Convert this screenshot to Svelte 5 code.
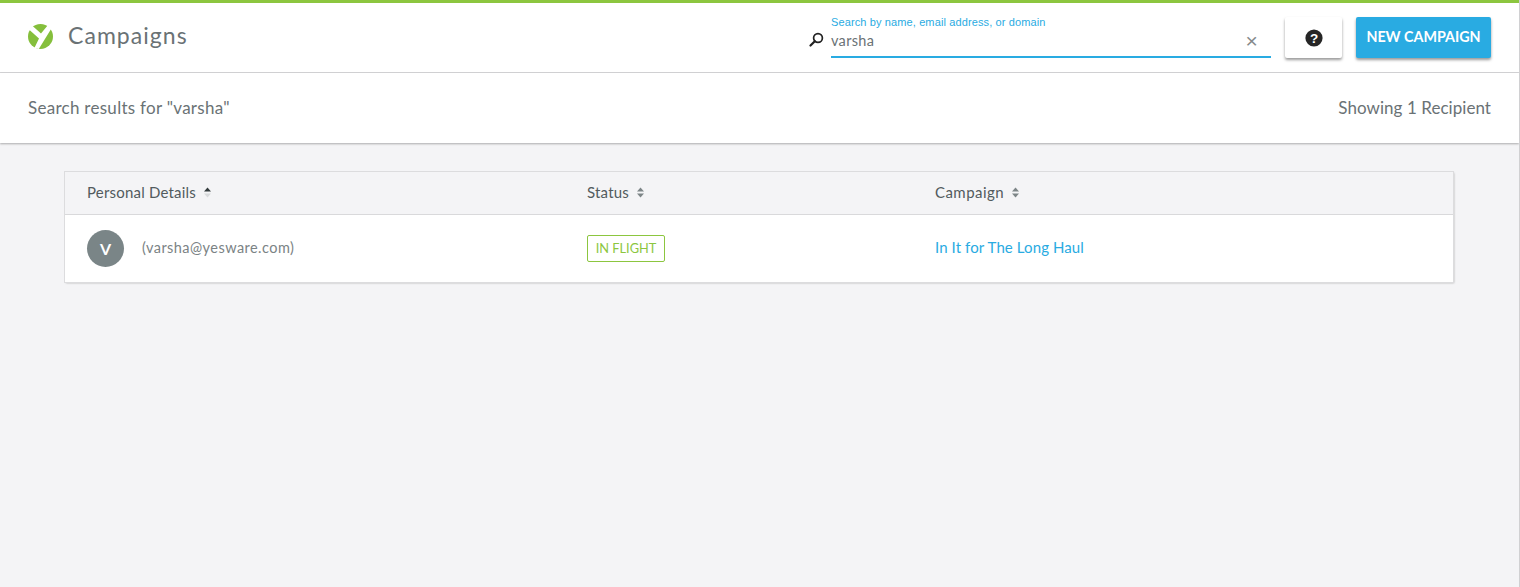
<script>
	const columns = [
		{ label: 'Personal Details', sorted: true },
		{ label: 'Status', sorted: false },
		{ label: 'Campaign', sorted: false }
	];
	let query = 'varsha';
</script>

<div class="page">
	<header class="topbar">
		<div class="brand">
			<svg class="logo" width="25" height="25" viewBox="0 0 25 25">
				<circle cx="12.5" cy="12.5" r="12.5" fill="#85bf3c" />
				<path d="M1 5.5 L4.6 2 L13 9.6 L19.6 1.5 L23.4 4.6 L10.8 25 L6.4 24 L11 14.6 Z" fill="#fff" />
			</svg>
			<h1>Campaigns</h1>
		</div>
		<div class="search">
			<svg class="lens" width="15" height="15" viewBox="0 0 15 15">
				<circle cx="9" cy="6" r="4.4" fill="none" stroke="#222" stroke-width="1.7" />
				<path d="M5.8 9.2 L1.5 13.5" stroke="#222" stroke-width="2.2" stroke-linecap="round" />
			</svg>
			<div class="field">
				<span class="float-label">Search by name, email address, or domain</span>
				<div class="input-row">
					<span class="value">{query}</span>
					<span class="clear">×</span>
				</div>
			</div>
		</div>
		<button class="help" aria-label="Help">
			<svg width="18" height="18" viewBox="0 0 18 18">
				<circle cx="9" cy="9" r="8.6" fill="#262626" />
				<text x="9" y="13.6" text-anchor="middle" class="qmark">?</text>
			</svg>
		</button>
		<button class="primary">NEW CAMPAIGN</button>
	</header>

	<section class="results">
		<span class="results-for">Search results for "{query}"</span>
		<span>Showing 1 Recipient</span>
	</section>

	<main>
		<div class="card">
			<div class="row head">
				{#each columns as col}
					<div class="th">
						{col.label}
						<svg class="sort" width="7" height="11" viewBox="0 0 7 11">
							<path d="M3.5 0.5 L7 4.5 H0 Z" fill={col.sorted ? '#333b3d' : '#7d8587'} />
							<path d="M3.5 10.5 L7 6.5 H0 Z" fill={col.sorted ? '#d8dadc' : '#7d8587'} />
						</svg>
					</div>
				{/each}
			</div>
			<div class="row body">
				<div class="person">
					<span class="avatar">V</span>
					<span class="email">(varsha@yesware.com)</span>
				</div>
				<div><span class="badge">IN FLIGHT</span></div>
				<div class="campaign"><a class="link" href="#campaign">In It for The Long Haul</a></div>
			</div>
		</div>
	</main>
</div>

<style>
	:global(body) {
		margin: 0;
		background: #f4f4f6;
	}

	.page {
		height: 587px;
		box-sizing: border-box;
		border-right: 1px solid #d0d0d2;
		background: #f4f4f6;
		font-family: Lato, 'Open Sans', sans-serif;
		color: #6a7275;
		overflow: hidden;
	}

	.topbar {
		height: 73px;
		box-sizing: border-box;
		border-top: 3px solid #8cc63f;
		border-bottom: 1px solid #d5d5d7;
		background: #fff;
		display: flex;
		align-items: center;
		padding: 0 28px;
	}

	.brand {
		display: flex;
		align-items: center;
		gap: 15px;
		flex: 1;
	}

	.logo {
		display: block;
		margin-bottom: 2px;
	}

	h1 {
		margin: 0 0 6px;
		font-size: 23px;
		font-weight: 400;
		letter-spacing: 1.05px;
		color: #6a7275;
	}

	.search {
		display: flex;
		align-items: flex-end;
		gap: 7px;
		margin-right: 14px;
		margin-bottom: 1px;
	}

	.lens {
		margin-bottom: 11px;
	}

	.field {
		width: 440px;
		border-bottom: 2px solid #29abe2;
	}

	.float-label {
		display: block;
		font-family: 'Liberation Sans', sans-serif;
		font-size: 11px;
		line-height: 13px;
		letter-spacing: 0.12px;
		color: #29abe2;
	}

	.input-row {
		display: flex;
		justify-content: space-between;
		align-items: center;
		height: 21px;
		margin: 1px 0 5px;
		font-size: 14.5px;
		letter-spacing: 0.3px;
	}

	.clear {
		font-family: 'Liberation Sans', sans-serif;
		font-size: 21px;
		color: #85898b;
		margin-right: 13px;
	}

	button {
		border: 0;
		border-radius: 2px;
		height: 41px;
		box-shadow: 0 2px 3px rgba(0, 0, 0, 0.4);
		cursor: pointer;
		font-family: inherit;
	}

	.help {
		width: 57px;
		background: #fff;
		display: flex;
		align-items: center;
		justify-content: center;
		margin-right: 14px;
	}

	.qmark {
		font-family: 'Liberation Sans', sans-serif;
		font-size: 13.5px;
		font-weight: 700;
		fill: #fff;
	}

	.primary {
		width: 135px;
		padding: 0 0 2px;
		background: #29abe2;
		color: #fff;
		font-size: 14.3px;
		font-weight: 700;
	}

	.results {
		height: 70px;
		box-sizing: border-box;
		background: #fff;
		box-shadow: 0 1px 2px rgba(0, 0, 0, 0.3);
		display: flex;
		align-items: center;
		justify-content: space-between;
		padding: 0 28px 2px;
		font-size: 17px;
		letter-spacing: 0.05px;
	}

	.results-for {
		letter-spacing: 0.28px;
	}

	main {
		padding: 29px 65px 0;
	}

	.card {
		width: 1388px;
		background: #fff;
		box-shadow: 0 0 0 1px #dcdcde, 1px 1px 2px rgba(0, 0, 0, 0.3);
	}

	.row {
		display: grid;
		grid-template-columns: 500px 348px 1fr;
		align-items: center;
		padding-left: 22px;
	}

	.head {
		height: 40px;
		padding-bottom: 2px;
		background: #f4f4f6;
		border-bottom: 1px solid #d9d9db;
	}

	.th {
		display: flex;
		align-items: center;
		gap: 8px;
		font-size: 15px;
		letter-spacing: 0.2px;
		color: #525b5e;
	}

	.th:last-child {
		letter-spacing: 0.45px;
	}

	.body {
		height: 67px;
		font-size: 14.5px;
	}

	.person {
		display: flex;
		align-items: center;
		gap: 18px;
	}

	.avatar {
		width: 37px;
		height: 37px;
		border-radius: 50%;
		background: #7a8587;
		color: #fff;
		font-size: 16px;
		font-weight: 700;
		display: flex;
		align-items: center;
		justify-content: center;
	}

	.email {
		padding-bottom: 2px;
		letter-spacing: 0.45px;
		color: #7b8385;
	}

	.badge {
		display: inline-block;
		box-sizing: border-box;
		height: 27px;
		line-height: 25px;
		width: 78px;
		text-align: center;
		border: 1px solid #8cc63f;
		border-radius: 2px;
		color: #8cc63f;
		font-size: 12.8px;
	}

	.campaign {
		padding-bottom: 4px;
	}

	.link {
		color: #29abe2;
		text-decoration: none;
		font-size: 15px;
		letter-spacing: 0.1px;
	}
</style>
